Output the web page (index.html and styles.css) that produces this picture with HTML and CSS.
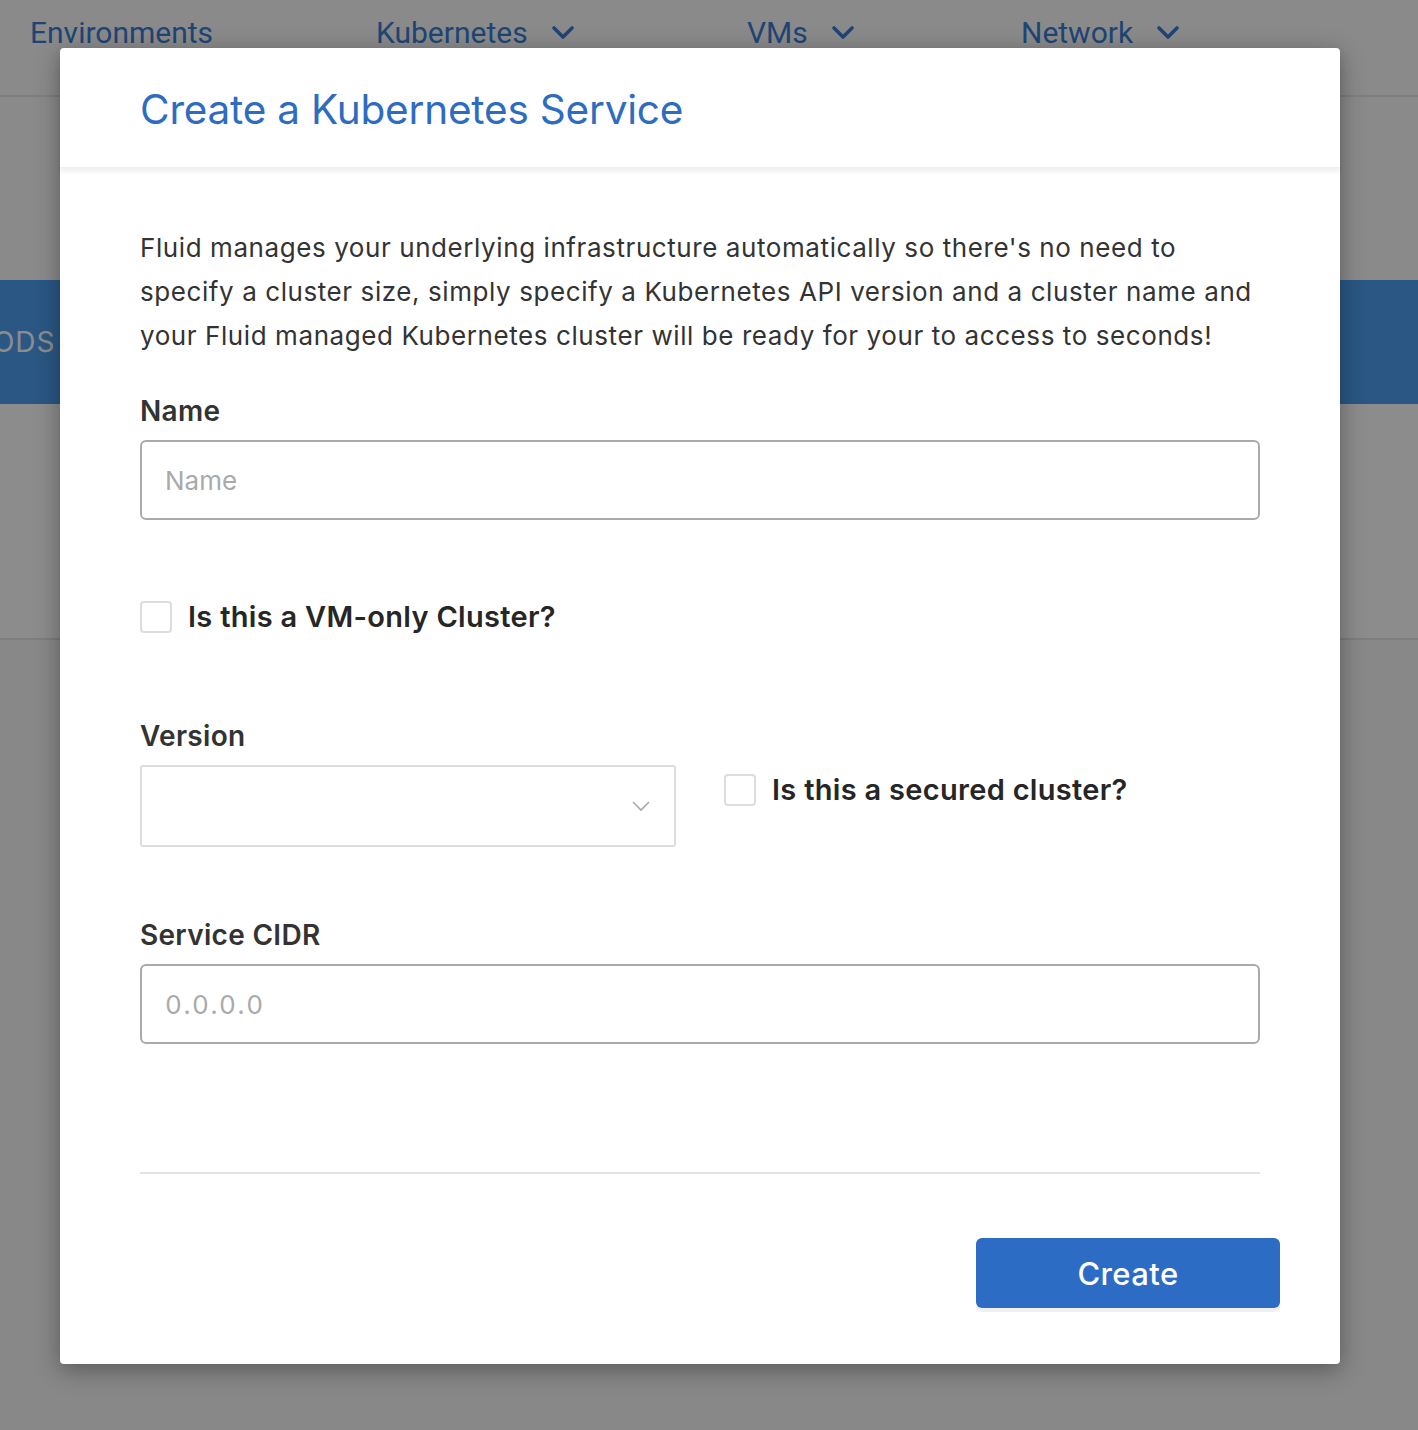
FILE: index.html
```html
<!DOCTYPE html>
<html>
<head>
<meta charset="utf-8">
<link rel="stylesheet" href="styles.css">
</head>
<body>
<div class="page">
  <header class="topbar">
    <nav class="nav">
      <span class="nav-item nav-env">Environments</span>
      <span class="nav-item nav-k8s">Kubernetes <svg class="chev" viewBox="0 0 24 16"><path d="M3 3 L12 12 L21 3" /></svg></span>
      <span class="nav-item nav-vms">VMs <svg class="chev" viewBox="0 0 24 16"><path d="M3 3 L12 12 L21 3" /></svg></span>
      <span class="nav-item nav-net">Network <svg class="chev" viewBox="0 0 24 16"><path d="M3 3 L12 12 L21 3" /></svg></span>
    </nav>
  </header>
  <section class="spacer-a"></section>
  <section class="band"><span class="band-text">PODS</span></section>
  <section class="spacer-b"></section>
  <section class="rest"></section>
</div>

<div class="overlay"></div>

<div class="modal">
  <div class="modal-head">
    <h1 class="modal-title">Create a Kubernetes Service</h1>
  </div>
  <div class="modal-body">
    <p class="intro">Fluid manages your underlying infrastructure automatically so there's no need to specify a cluster size, simply specify a Kubernetes API version and a cluster name and your Fluid managed Kubernetes cluster will be ready for your to access to seconds!</p>

    <label class="field-label name-label">Name</label>
    <div class="input"><span class="placeholder">Name</span></div>

    <div class="check-row vm-row">
      <span class="checkbox"></span>
      <span class="check-label">Is this a VM-only Cluster?</span>
    </div>

    <label class="field-label version-label">Version</label>
    <div class="version-row">
      <div class="select">
        <svg class="select-chev" viewBox="0 0 20 14"><path d="M2 3 L10 11 L18 3" /></svg>
      </div>
      <div class="check-row secured-row">
        <span class="checkbox"></span>
        <span class="check-label">Is this a secured cluster?</span>
      </div>
    </div>

    <label class="field-label cidr-label">Service CIDR</label>
    <div class="input"><span class="placeholder numeric">0.0.0.0</span></div>

    <hr class="divider">
  </div>
  <div class="modal-foot">
    <button class="btn-create">Create</button>
  </div>
</div>
</body>
</html>
```

FILE: styles.css
```css
* { box-sizing: border-box; }
html, body { margin: 0; padding: 0; }
body {
  width: 1418px;
  height: 1430px;
  overflow: hidden;
  font-family: Inter, "Noto Sans", sans-serif;
  background: #fff;
  position: relative;
}

.page { display: flex; flex-direction: column; height: 1430px; }
.topbar {
  height: 97px;
  background: #fcfcfc;
  border-bottom: 2px solid #e6e6e6;
}
.nav { position: relative; height: 66px; }
.nav-item {
  position: absolute;
  top: 15px;
  font-family: Roboto, "Liberation Sans", sans-serif;
  font-size: 30px;
  color: #3a7fd6;
  display: inline-flex;
  align-items: center;
  gap: 23px;
}
.nav-env { left: 30px; }
.nav-k8s { left: 376px; }
.nav-vms { left: 747px; }
.nav-net { left: 1021px; }
.chev { width: 24px; height: 16px; }
.chev path { fill: none; stroke: #3a7fd6; stroke-width: 3.6; stroke-linecap: round; stroke-linejoin: round; }

.spacer-a { height: 183px; background: #fcfcfc; }
.band {
  height: 124px;
  background: #4d9ff0;
  display: flex;
  align-items: center;
}
.band-text { font-size: 28px; color: #fff; margin-left: -26px; letter-spacing: 1px; }
.spacer-b { height: 236px; background: #fff; border-bottom: 2px solid #e6e6e6; }
.rest { flex: 1; background: #f8f8f8; }

.overlay {
  position: absolute;
  inset: 0;
  background: rgba(0, 0, 0, 0.45);
}

.modal {
  position: absolute;
  left: 60px;
  top: 48px;
  width: 1280px;
  height: 1316px;
  background: #fff;
  border-radius: 4px;
  box-shadow: 0 6px 24px rgba(0,0,0,0.35);
  display: flex;
  flex-direction: column;
}
.modal-head {
  height: 120px;
  padding: 0 80px;
  display: flex;
  align-items: center;
  box-shadow: 0 3px 6px rgba(0,0,0,0.08);
  border-bottom: 1px solid #f0f0f0;
  position: relative;
}
.modal-title {
  margin: 0;
  padding-top: 3px;
  font-size: 40.5px;
  font-weight: 400;
  color: #2d6cc0;
  letter-spacing: -0.2px;
}
.modal-body {
  padding: 58px 80px 0;
  display: flex;
  flex-direction: column;
}
.intro {
  margin: 0;
  font-size: 26px;
  line-height: 44px;
  color: #333;
  letter-spacing: 0.58px;
}
.field-label {
  display: block;
  font-size: 28px;
  font-weight: 600;
  color: #333;
  line-height: 40px;
  letter-spacing: 0.3px;
}
.name-label { margin-top: 33px; }
.input {
  margin-top: 9px;
  height: 80px;
  border: 2px solid #aaa;
  border-radius: 6px;
  display: flex;
  align-items: center;
  padding-left: 23px;
}
.placeholder { font-size: 26px; color: #aaa; }
.placeholder.numeric { font-variant-numeric: tabular-nums; letter-spacing: 1.6px; }

.check-row { display: flex; align-items: center; gap: 16px; }
.vm-row { margin-top: 79px; }
.checkbox {
  width: 32px;
  height: 32px;
  border: 2px solid #ddd;
  border-radius: 4px;
  flex: none;
}
.check-label { font-size: 29px; font-weight: 600; color: #262626; letter-spacing: 0.3px; }

.version-label { margin-top: 82px; }
.version-row { display: flex; align-items: flex-start; gap: 48px; margin-top: 9px; }
.select {
  width: 536px;
  height: 82px;
  border: 2px solid #ddd;
  border-radius: 3px;
  position: relative;
}
.select-chev { position: absolute; right: 23px; top: 32px; width: 20px; height: 14px; }
.select-chev path { fill: none; stroke: #aaa; stroke-width: 1.6; }
.secured-row { margin-top: 7px; }

.cidr-label { margin-top: 68px; }
.divider {
  margin: 128px 0 0;
  border: 0;
  border-top: 2px solid #e2e2e2;
}
.modal-foot {
  display: flex;
  justify-content: flex-end;
  padding: 64px 60px 0;
}
.btn-create {
  width: 304px;
  height: 70px;
  background: #2d6cc4;
  color: #fff;
  border: 0;
  border-radius: 6px;
  font-family: Inter, sans-serif;
  font-size: 31px;
  font-weight: 500;
  letter-spacing: 0.4px;
  box-shadow: 0 4px 0 #f0f0f0;
}
```
